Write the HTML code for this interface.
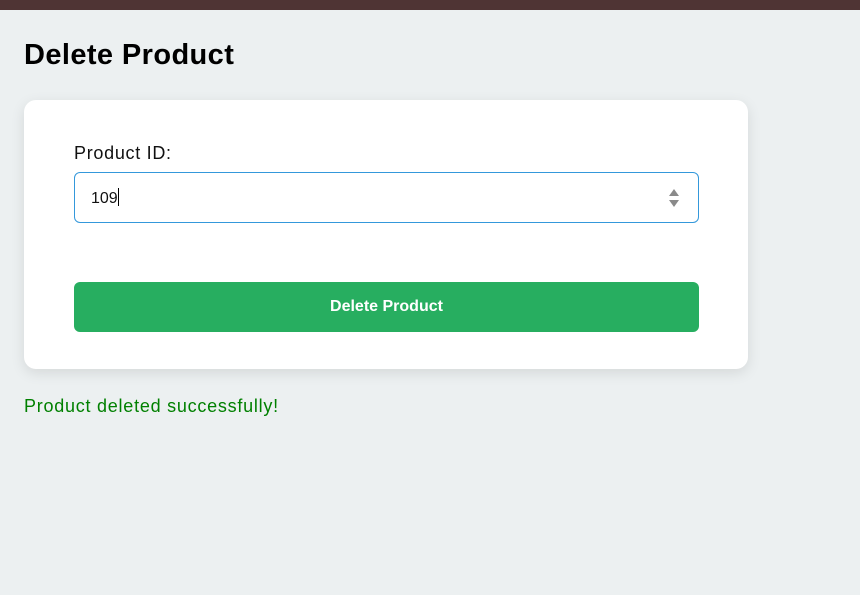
<!DOCTYPE html>
<html><head><style>
*{box-sizing:border-box;margin:0;padding:0}
body{width:860px;height:595px;background:#ecf0f1;font-family:"Liberation Sans",sans-serif;position:relative;overflow:hidden}
.bar{position:absolute;left:0;top:0;width:860px;height:10px;background:#4f3434}
h1{position:absolute;left:24px;top:39px;font-size:29px;letter-spacing:0.4px;font-weight:bold;color:#000}
.card{position:absolute;left:24px;top:100px;width:724px;height:269px;background:#fff;border-radius:12px;box-shadow:0 4px 14px rgba(0,0,0,0.1)}
label{position:absolute;left:74px;top:143px;font-size:18px;letter-spacing:0.7px;color:#111}
.inp{position:absolute;left:74px;top:172px;width:625px;height:51px;border:1px solid #3498db;border-radius:6px;background:#fff}
.inp span{position:absolute;left:16px;top:15px;font-size:16px;color:#111}
.cur{display:inline-block;width:1px;height:18px;background:#000;vertical-align:-3px}
.spin{position:absolute;right:18px;top:15px;width:12px;height:20px}
.btn{position:absolute;left:74px;top:282px;width:625px;height:50px;background:#27ae60;border-radius:6px;color:#fff;font-weight:bold;font-size:16px;text-align:center;line-height:50px}
.msg{position:absolute;left:24px;top:396px;font-size:18px;letter-spacing:0.75px;color:#008000}
</style></head><body>
<div class="bar"></div>
<h1>Delete Product</h1>
<div class="card"></div>
<label>Product ID:</label>
<div class="inp"><span>109<i class="cur"></i></span>
<svg class="spin" viewBox="0 0 12 20"><path d="M6 1L11 8H1Z" fill="#8a8a8a"/><path d="M6 19L11 12H1Z" fill="#8a8a8a"/></svg></div>
<div class="btn">Delete Product</div>
<div class="msg">Product deleted successfully!</div>
</body></html>
